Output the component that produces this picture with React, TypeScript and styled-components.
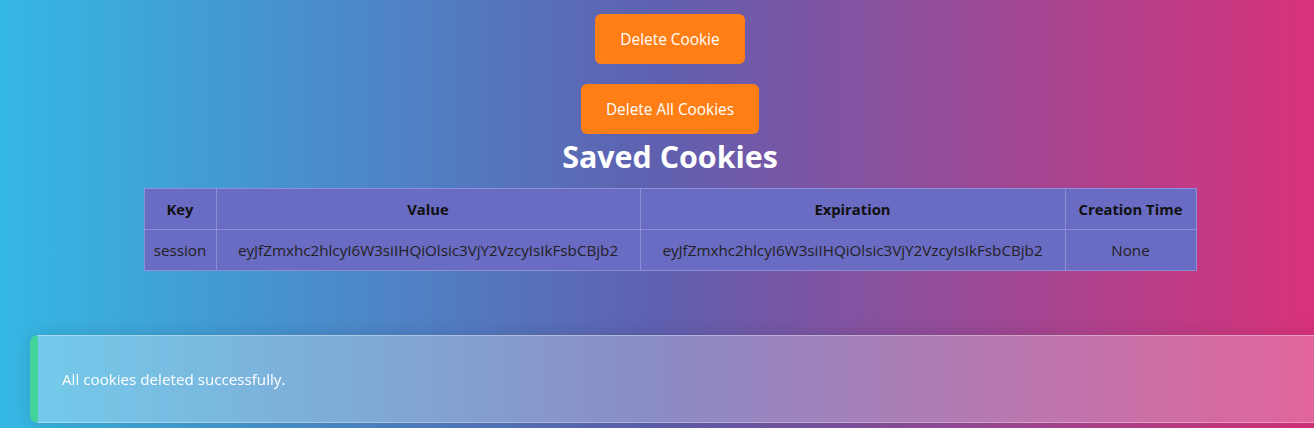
import React from "react";
import styled, { createGlobalStyle } from "styled-components";

const GlobalStyle = createGlobalStyle`
  html, body {
    margin: 0;
    padding: 0;
  }
  body {
    min-height: 100vh;
    overflow: hidden;
    font-family: "Open Sans", "Noto Sans", sans-serif;
    background: linear-gradient(to right, #35b8e4 0%, #5f60b0 50%, #d8327b 100%);
    background-attachment: fixed;
  }
`;

const Page = styled.main`
  display: flex;
  flex-direction: column;
  align-items: center;
  padding: 14px 0 0 26px;
  min-height: 428px;
  box-sizing: border-box;
`;

const Button = styled.button`
  height: 50px;
  padding: 0 25px;
  border: none;
  border-radius: 6px;
  background: #ff7f16;
  color: #fff;
  font-family: inherit;
  font-size: 15.4px;
  cursor: pointer;
  margin-bottom: 20px;
  &:last-of-type {
    margin-bottom: 0;
  }
`;

const Title = styled.h2`
  margin: 3px 0 11px;
  color: #fff;
  font-size: 30.4px;
  font-weight: 700;
  line-height: 40px;
`;

const Table = styled.table`
  width: 1052px;
  table-layout: fixed;
  border-collapse: collapse;
  background: #6a6bc2;
`;

const Th = styled.th`
  height: 40px;
  padding: 0 8px;
  border: 1px solid #8d8fd6;
  color: #111;
  font-size: 14.8px;
  font-weight: 700;
  text-align: center;
  white-space: nowrap;
`;

const Td = styled.td`
  height: 40px;
  padding: 0 8px;
  border: 1px solid #8d8fd6;
  color: #222;
  font-size: 15.2px;
  text-align: center;
  white-space: nowrap;
`;

const Toast = styled.div`
  position: fixed;
  left: 30px;
  top: 335px;
  width: 100%;
  height: 88px;
  box-sizing: border-box;
  display: flex;
  align-items: center;
  padding-left: 24px;
  border: 1px solid rgba(255, 255, 255, 0.35);
  border-left: 8px solid #42d49c;
  border-radius: 8px;
  background: linear-gradient(to right, rgba(255, 255, 255, 0.3), rgba(255, 255, 255, 0.25));
  box-shadow: 0 0 18px rgba(0, 0, 0, 0.12);
  color: #fff;
  font-size: 15.2px;
`;

const token = "eyJfZmxhc2hlcyI6W3siIHQiOlsic3VjY2VzcyIsIkFsbCBjb2";

export default function App() {
  return (
    <>
      <GlobalStyle />
      <Page>
        <Button>Delete Cookie</Button>
        <Button>Delete All Cookies</Button>
        <Title>Saved Cookies</Title>
        <Table>
          <colgroup>
            <col style={{ width: 72 }} />
            <col style={{ width: 424 }} />
            <col style={{ width: 425 }} />
            <col style={{ width: 131 }} />
          </colgroup>
          <thead>
            <tr>
              <Th>Key</Th>
              <Th>Value</Th>
              <Th>Expiration</Th>
              <Th>Creation Time</Th>
            </tr>
          </thead>
          <tbody>
            <tr>
              <Td>session</Td>
              <Td>{token}</Td>
              <Td>{token}</Td>
              <Td>None</Td>
            </tr>
          </tbody>
        </Table>
      </Page>
      <Toast>All cookies deleted successfully.</Toast>
    </>
  );
}
